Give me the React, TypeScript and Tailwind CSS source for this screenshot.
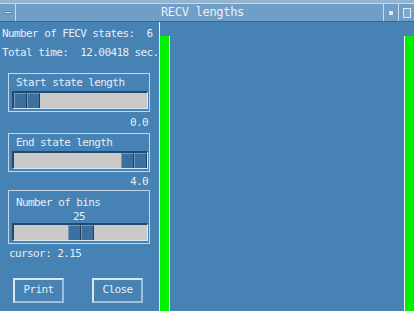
import React from 'react';

const font = { fontFamily: '"DejaVu Sans Mono", "Liberation Mono", monospace' };

function Slider({ pos }: { pos: 'start' | 'middle' | 'end' }) {
  const justify =
    pos === 'start' ? 'justify-start' : pos === 'end' ? 'justify-end' : 'justify-center';
  return (
    <div
      className={`flex ${justify} h-[18px] ml-[3px] mr-[1px] bg-[#c9c9c9] border-t-2 border-l-2 border-[#23496e] border-b border-r border-b-[#dde6ee] border-r-[#dde6ee]`}
    >
      <div className="flex w-[26px] h-full">
        <div className="flex-1 bg-[#3a6f9f] border-t border-l border-[#6f9cc4] border-r border-r-[#1d3f60]" />
        <div className="flex-1 bg-[#3a6f9f] border-t border-l border-[#6f9cc4] border-r border-r-[#1d3f60]" />
      </div>
    </div>
  );
}

function Group({ children, className = '' }: { children: React.ReactNode; className?: string }) {
  return (
    <div className={`ml-[8px] mr-[9px] border border-[#c3d6e8] pb-[2px] ${className}`}>
      {children}
    </div>
  );
}

function WinButton({ label }: { label: string }) {
  return (
    <div className="w-[51px] h-[25px] flex items-center justify-center border-2 border-t-[#d8e6f2] border-l-[#d8e6f2] border-b-[#9fc0dc] border-r-[#9fc0dc] bg-[#4682b4]">
      {label}
    </div>
  );
}

export default function App() {
  return (
    <div
      className="w-[414px] h-[311px] bg-[#4682b4] text-[#e6eef6] text-[11px] tracking-[-0.6px] flex flex-col overflow-hidden"
      style={font}
    >
      {/* Title bar */}
      <div className="h-[4px] bg-[#93b3cf] border-b border-[#c9d9e6]" />
      <div className="h-[18px] flex bg-[#709ec7] border-b border-[#3a6a96]">
        <div className="w-[16px] flex items-center justify-center border-r border-[#c9d9e6]">
          <div className="w-[8px] h-[3px] bg-[#d7e3ee] border border-[#5d86aa]" />
        </div>
        <div className="flex-1 text-center leading-[17px] text-[12px] tracking-[-0.3px] text-[#e8f0f7] pl-[6px]">
          RECV lengths
        </div>
        <div className="w-[15px] flex items-center justify-center border-l border-[#c9d9e6]">
          <div className="w-[4px] h-[4px] bg-[#dfe9f2]" />
        </div>
        <div className="w-[16px] flex items-center justify-center border-l border-[#c9d9e6]">
          <div className="w-[8px] h-[10px] border border-[#dfe9f2] bg-[#7fa8cc]" />
        </div>
      </div>

      {/* Body */}
      <div className="flex-1 flex">
        <div className="w-[159px] flex flex-col">
          <div className="mt-[5px] pl-[2px] leading-[13px] whitespace-pre">Number of FECV states:  6</div>
          <div className="mt-[6px] pl-[2px] leading-[13px] whitespace-pre">Total time:  12.00418 sec.</div>

          <Group className="mt-[14px]">
            <div className="pl-[7px] h-[17px] leading-[17px]">Start state length</div>
            <Slider pos="start" />
          </Group>
          <div className="text-right pr-[11px] leading-[13px] mt-[4px]">0.0</div>

          <Group className="mt-[4px]">
            <div className="pl-[7px] h-[17px] leading-[17px]">End state length</div>
            <Slider pos="end" />
          </Group>
          <div className="text-right pr-[11px] leading-[13px] mt-[3px]">4.0</div>

          <Group className="mt-[2px]">
            <div className="pl-[7px] h-[20px] pt-[4px] leading-[16px]">Number of bins</div>
            <div className="text-center h-[12px] leading-[12px]">25</div>
            <Slider pos="middle" />
          </Group>
          <div className="pl-[9px] leading-[13px] mt-[3px]">cursor: 2.15</div>

          <div className="flex pl-[13px] gap-[28px] mt-[18px]">
            <WinButton label="Print" />
            <WinButton label="Close" />
          </div>
        </div>

        {/* Plot */}
        <div className="flex-1 flex justify-between border-l border-[#e8f0f6] pt-[14px]">
          <div className="w-[10px] bg-[#00f000] border-r border-[#e8f6e8]" />
          <div className="w-[10px] bg-[#00f000] border-l border-[#e8f6e8]" />
        </div>
      </div>
    </div>
  );
}
